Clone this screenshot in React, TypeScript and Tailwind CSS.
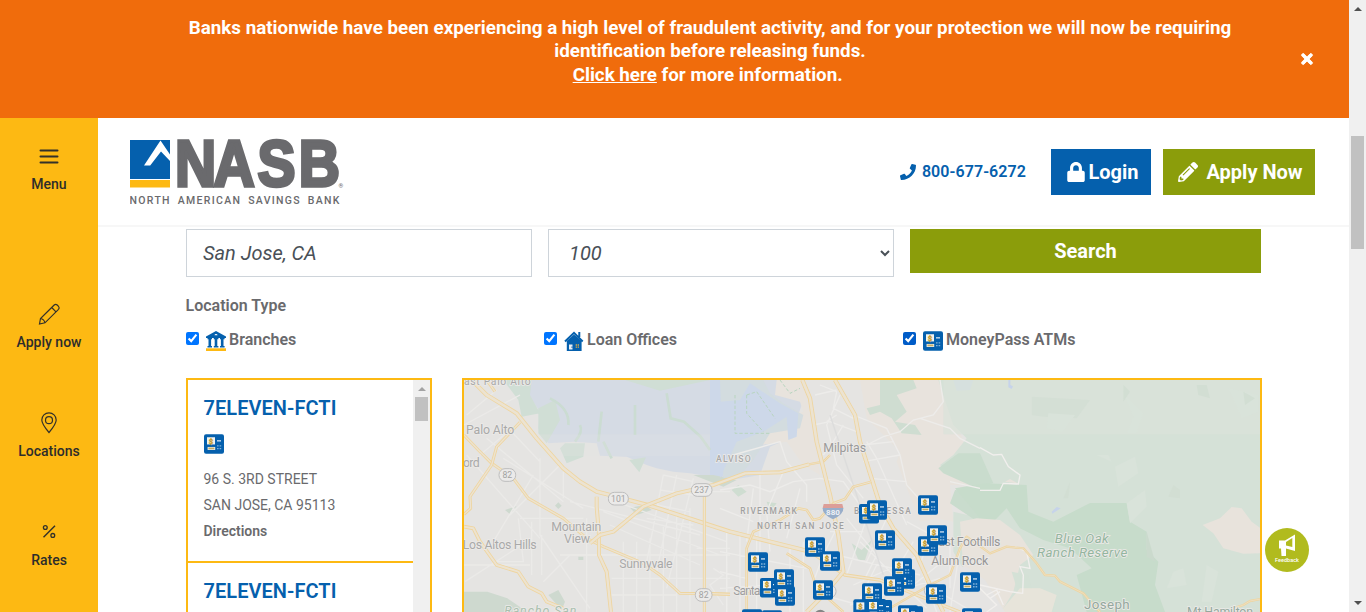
import type { ReactNode } from "react";
import { FaPhone, FaLock, FaPencilAlt, FaTimes } from "react-icons/fa";

function AtmGlyph() {
  return (
    <g>
      <rect x="0" y="0" width="20" height="19.5" rx="2" fill="#0560ad" />
      <rect x="3" y="3" width="8" height="7.2" fill="#f3f3ee" />
      <text x="7" y="9.4" fontSize="7.5" fontWeight="900" textAnchor="middle" fill="#c39a2c" stroke="#c39a2c" strokeWidth="0.300" fontFamily="Roboto, sans-serif">
        $
      </text>
      <rect x="3.6" y="12.7" width="7.6" height="3" fill="#f3f3ee" />
      <rect x="4.4" y="13.3" width="6" height="1.7" fill="#c3ac65" />
      <rect x="13" y="6" width="4" height="1.2" fill="#e4edf6" />
      <path d="M13 11.6h1.600M15.600 11.600h1.600M13 14.400h1.600M15.600 14.400h1.600" stroke="#7fb0d8" strokeWidth="1.400" />
    </g>
  );
}

function AtmIcon() {
  return (
    <svg viewBox="0 0 20 19.5" className="h-5 w-5 shrink-0">
      <AtmGlyph />
    </svg>
  );
}

function BranchIcon() {
  return (
    <svg viewBox="0 0 20 20" className="h-5 w-5 shrink-0">
      <path d="M10 0L0 5.600V7h20V5.600z" fill="#0560ad" />
      <path d="M8.500 4.300a1.500 1.300 0 0 1 3 0z" fill="#fff" />
      <path d="M1.500 7.500H6M7.800 7.500h4.600M14 7.500h4.600M1.500 15.700H6M7.800 15.700h4.600M14 15.700h4.600" stroke="#0560ad" strokeWidth="1.400" />
      <path d="M3.800 7v9M10 7v9M16.200 7v9" stroke="#0560ad" strokeWidth="2.600" />
      <rect y="17.300" width="20" height="2.700" fill="#fdb913" />
    </svg>
  );
}

function HouseIcon() {
  return (
    <svg viewBox="0 0 20 20" className="h-5 w-5 shrink-0">
      <path d="M10 3.500L2.800 10v10h14.800V10z" fill="#0560ad" />
      <path d="M1 10.500L10 1.800l8.700 8.700M15.300 1v5" fill="none" stroke="#0560ad" strokeWidth="2" />
      <rect x="5" y="13.500" width="3.500" height="5" fill="#e9eef3" />
      <rect x="7.500" y="15.500" width="1" height="1.400" fill="#0560ad" />
      <path d="M11.700 14h1.200M13.700 14h1.200M11.700 16.200h1.200M13.700 16.200h1.200" stroke="#f2b43c" strokeWidth="1.300" />
    </svg>
  );
}

function Logo() {
  return (
    <svg viewBox="0 0 216 68" className="h-[68px] w-[216px]">
      <rect x="0" y="2" width="40" height="39" fill="#0560ad" />
      <rect x="0" y="42" width="40" height="7.500" fill="#fdb913" />
      <path d="M30.500 2.500L14 27.500h6.200L31 13.500l9 9.500v-6.500z" fill="#fff" />
      <g transform="scale(.87 1)">
        <text x="51.700 96 146.500 194" y="48" fontSize="65.500" fontWeight="700" fill="#6a6a6d" stroke="#6a6a6d" strokeWidth="3.400" fontFamily="'Liberation Sans', sans-serif">
          NASB
        </text>
      </g>
      <text x="208.500" y="50" fontSize="6" fill="#6a6a6d" fontFamily="Roboto, sans-serif">
        ®
      </text>
      <text x="-0.500" y="66" fontSize="10.500" fontWeight="500" fill="#6a6a6d" fontFamily="Roboto, sans-serif" wordSpacing="3" textLength="210">
        NORTH AMERICAN SAVINGS BANK
      </text>
    </svg>
  );
}

const markers = [
  [84, 532], [120, 609], [162, 583], [165, 634], [255, 487], [300, 529], [279, 616],
  [417, 387], [441, 376], [594, 361], [594, 484], [621, 451], [465, 466], [525, 583],
  [516, 550], [492, 604], [426, 625], [400, 673], [456, 675], [438, 672], [618, 628],
  [720, 592], [66, 703], [126, 706], [549, 694], [534, 691], [726, 700],
];

function Road({ d, w = 9 }: { d: string; w?: number }) {
  return (
    <g fill="none" strokeLinejoin="round">
      <path d={d} stroke="#efd59f" strokeWidth={w} />
      <path d={d} stroke="#ece3d1" strokeWidth={w - 5} />
    </g>
  );
}

function Label({ x, y, size = 37, fill = "#a9a9a9", children, spacing = 0, width }: { x: number; y: number; size?: number; fill?: string; children: ReactNode; spacing?: number; width?: number }) {
  return (
    <text x={x} y={y} fontSize={size} fill={fill} stroke="#eceae8" strokeWidth="5" paintOrder="stroke" letterSpacing={spacing} textLength={width}>
      {children}
    </text>
  );
}

function Shield({ x, y, w, children }: { x: number; y: number; w: number; children: ReactNode }) {
  return (
    <g>
      <rect x={x - w / 2} y={y - 19} width={w} height="38" rx="18" fill="#ebeae9" stroke="#bdbdbd" strokeWidth="3" />
      <text x={x} y={y + 9} fontSize="26" textAnchor="middle" fill="#a2a2a2">
        {children}
      </text>
    </g>
  );
}

function MapView() {
  return (
    <svg viewBox="12 15 2388 696" className="h-[232px] w-[796px]" fontFamily="Roboto, sans-serif">
      <rect x="0" y="0" width="2410" height="720" fill="#e5e4e2" />
      {/* bay and wetlands */}
      <path d="M115 15H1010L1025 90 990 190 930 215 900 300 830 312 780 310 690 295 640 290 590 280 560 270 500 245 420 242 410 205 340 200 265 205 235 160 240 110 205 60 170 30z" fill="#d5dbe4" />
      <path d="M750 15H880L850 170 820 210 800 310 750 305z" fill="#cdd8e9" />
      <path d="M130 15h85l-5 45 30 55 -55 10 -10 -50zM235 100l50-25 15 60 -40 70 -25 -30zM300 220l15-15 60 0 -5 40 -50 20zM508 255l50-8 -20 45zM605 15h145l-150 32 -105-32z" fill="#d0ded5" />
      <path d="M620 55l12 75 40 10 50 45 28 40M270 70q60 30 55 80M425 110l-10 90M360 150q10 20-15 50M525 90v90M455 250l-25-50" fill="none" stroke="#cbdcd2" strokeWidth="8" />
      <path d="M700 300l60 0 70 15 -40 20zM510 398l45-8 20 15 -45 15zM285 392l10-10 10 10 -10 10zM135 405l35-12 -20 25zM12 650h70l60 20 60 41H12zM265 660l30-15 20 35 -10 25zM355 545h15v10h-15z" fill="#ced9cf" />
      <rect x="237" y="178" width="513" height="65" fill="#e5e4e2" opacity=".25" />
      {/* minor streets */}
      <g fill="none" stroke="#ebeae8" strokeWidth="4">
        <path d="M20 120L110 45M12 150L180 60M60 240L150 165 240 260M20 240L240 490M80 190L310 380M130 250L370 400M220 300L100 500M300 270L150 420M240 250V480L390 700M310 290V370M180 430H370M175 430L190 560 110 560M215 440V600M245 480V600M12 570H210M15 620L200 500M300 540H640M380 430V710M330 540L250 620M330 380L720 480M440 370L800 500M430 410L780 540M450 450L720 570M610 300L560 560M650 300L590 590M700 310L620 640M610 300L700 320M600 345L700 360M590 390L690 410M560 430L700 450M490 500V711M530 500V711M570 490V711M610 450V711M650 420V711M690 400V711M460 540H810M455 610H810M455 660H650M710 520H810M720 350H810M760 580L790 600 750 630 790 690M800 560V711" />
      </g>

      {/* hills east of the valley */}
      <g transform="translate(780 0)">
        <path d="M170 15H240L270 90 300 300 250 270 200 200 120 210 40 240 5 310 50 240 120 150 250 110 240 80 165 60zM420 15H660L780 330 690 330 700 440 650 430 600 440 530 260 540 230 440 130z" fill="#e8e3dd" />
        <path d="M0 15h130l20 40 40 30 60 35 -10 40 -90 15 -50 80 -40 45 -50 10z" fill="#d3dcdf" />
        <path d="M0 80l60-5 30-50 90 60 55 30 -5 70 -25 10 -5 -70 -70 45 -80 30 -50 110zM50 90l40-35 55 30 -20 60 -30 30z" fill="#cdd8e9" />
        <path d="M80 60L110 50 165 130M45 60V175H150M80 60v55l50 55M180 15l30 40 30-15" fill="none" stroke="#b8d5bf" strokeWidth="3" strokeDasharray="10 6" />
        <path d="M480 15h100l10 25 -60 20 30 50 -35 30 60 10 20 30 -60-5 -30-45 -35-20 -30 10 -10-20 40-10zM395 505l30 20 30-30 -20 60 -20 0zM35 345l20-15 25 20 -25 15zM140 380l30 5 -20 25z" fill="#cfddd1" />
        <path d="M655 15H1680V720H730L740 600 700 530 700 410 785 430 780 340 690 300 660 270 700 240 740 190 700 150 670 60z" fill="#d5e1d7" />
        <path d="M655 280l60-45 65 0 40 90 -60 10 -90-40zM705 345l120 10 0 90 -60-10 -75-50z" fill="#c9dccd" />
        <path d="M700 15h60l-10 30 -40 2z" fill="#ced9e8" />
      </g>
      <g transform="translate(1560 0)">
        <rect x="-110" y="15" width="960" height="163" fill="#dae2da" opacity=".7" />
        <path d="M-75 340L15 325 140 330 145 410 220 440 330 384H440L450 440 500 470 500 525 535 560 525 630 555 711H320L290 600 335 580 270 520 190 495 120 460 80 400 40 440 0 430z" fill="#c7dccb" />
        <path d="M155 65L330 75 290 130 190 125 155 120z" fill="#d4dfd5" />
        <path d="M205 115l80 5 -35 50 -50-10zM405 275l60-30 10 50 -60 40zM440 385l55-40 5 50 -50 50zM745 40l90 20 0 50 -50 20zM350 240l35 0 10 20zM680 570l35 20 -20 90 -30 0zM580 590l30-10 10 50 -60 10zM430 55l60 60 -20 60 -30 0 20-50z" fill="#d9e3da" />
        <path d="M650 30l30 0 10 40 -35-10zM270 320l-20 50 15 0zM430 30l20 20 -20 30zM790 50l35 20 -30 20zM580 330l20 15 0 25 -35-5z" fill="#d2ded3" />
        <path d="M500 470v75l25 15z" fill="#cbdacd" />
        <path d="M668 450L720 430 755 396 785 400 815 440 842 460V535L790 536 730 520 700 475zM-60 440l50-10 70 5 60 45 40 60 -40 30 -20 80 -30 50 -100 11 -30-60 10-70zM75 320l15-8 25 14z" fill="#e8e3dc" />
        <path d="M95 590l50 10 15 60 -40 10zM150 650l50 0 30 10 -10 50 -90 1z" fill="#d4e1d6" />
        <path d="M120 640l60 0 50 20 -15 51H60z" fill="#e7e4da" />
        <path d="M215 410l15-14 12 4 -25 16zM85 15l6 0 0 15 8 4 -4 8 -10-5z" fill="#c6d3ea" />
        <path d="M-120 575l80 0 55 40 60 96H-120z" fill="#e5e4e3" />
        <path d="M0 218L40 240 65 238 85 275 120 300 115 327 70 325 60 346 0 346M105 515L140 530 150 580 120 575 130 600 128 655 90 650 0 630M20 660L50 645 70 690M-20 620L50 690 20 711M30 670l30-20" fill="none" stroke="#f1efed" strokeWidth="4" />
      </g>
      <g transform="translate(780 0)" fill="none" stroke="#edecea" strokeWidth="4">
        <path d="M660 15L670 80 640 120 580 135 540 170 490 185 440 210M780 220L720 190 690 160 600 130M690 320L780 340M300 30L350 50 340 100 400 130 400 110M285 60L350 45M320 140L350 120M370 150L340 200 310 240M400 120L500 160 540 240 560 330 640 420M430 210L520 200M430 260L540 240M450 310L560 320M440 200L470 250 560 450M360 60L320 150 350 270 430 370M280 150L330 140 410 170M40 240L180 200 200 260 260 330 260 380M0 345L90 330 150 350 220 320 300 310 370 320 420 390 500 400M120 300V550M190 290L140 410 150 530M240 340L200 490M100 340L80 500M0 400L100 440M0 530L260 580M0 590L80 610M0 640L150 630M20 470V711M60 470V711M110 480V711M210 520V711M250 500V711M360 440L310 540 280 620M380 430L470 540 430 620M440 430L380 600M500 430L440 560M420 500L620 700M350 540L600 600M400 630L690 500M390 690L660 610M310 660L490 711M580 500L520 600M630 480L600 570 650 711M690 500L690 640M720 520L690 711M330 470H430M470 570L400 711M560 440L690 510M680 550L580 630M640 640L740 700" />
        <path d="M330 120L490 600" stroke="#dcdcdc" />
      </g>

      {/* highways */}
      <Road d="M40 20L80 60 170 115 230 190 310 280 360 320 410 350 450 360 570 392 810 470 1050 530" w={13} />
      <Road d="M1050 530L1155 600 1260 615 1370 660 1500 711" w={10} />
      <Road d="M12 180L55 225 95 265 160 310 205 370 310 430 380 490 430 515 550 565 600 600 660 655 810 658" />
      <Road d="M180 142L110 215 95 270 30 365 32 400 12 418M80 15L105 50" />
      <Road d="M410 365V395L417 480 417 540 440 590 453 711" w={12} />
      <Road d="M390 505L420 480 460 470 550 395 650 355 760 330 855 295 960 292 1047 268" w={12} />
      <Road d="M1047 268L1090 260 1110 240" w={7} />
      <Road d="M12 455L40 460 60 500 110 570 175 590 205 635 245 655 260 680 310 700" w={11} />
      <Road d="M733 355V711M733 655L810 658" w={9} />
      <Road d="M1027 15L1050 70 1070 200 1110 360 1135 480 1150 590 1100 650 1040 711" w={13} />
      <Road d="M1125 15L1185 120 1200 200 1260 390 1300 460 1370 540 1410 630 1450 711" w={13} />
      <Road d="M1235 320L1180 335 1155 372 1120 385 1080 430 1060 435 1040 405 1015 400 960 435 880 470 860 520 860 711M980 535L1050 580 1070 640 1150 711M860 655L950 650 990 690" w={8} />
      <Road d="M1270 711L1410 630 1470 600 1500 520 1520 485 1590 535 1640 515 1690 520 1730 565 1755 600 1785 602 1800 620 1870 655 1900 690 1920 711" w={7} />
      <Road d="M2320 700L2350 690 2370 678 2402 672" w={7} />

      <Label x={12} y={30} size={31} width={200}>ast Palo Alto</Label>
      <Label x={18} y={177} width={145}>Palo Alto</Label>
      <Label x={9} y={276} width={50}>ord</Label>
      <Label x={274} y={468} width={150}>Mountain</Label>
      <Label x={312} y={504} width={78}>View</Label>
      <Label x={8} y={522} width={222}>Los Altos Hills</Label>
      <Label x={478} y={579} width={160}>Sunnyvale</Label>
      <g fontStyle="italic"><Label x={133} y={720} fill="#a9bfae" width={216}>Rancho San</Label></g>
      <g fontWeight="500">
        <Label x={768} y={261} size={26} spacing={3} width={107}>ALVISO</Label>
        <Label x={841} y={417} size={25} fill="#a0a0a0" width={169}>RIVERMARK</Label>
        <Label x={891} y={462} size={25} fill="#a0a0a0" width={260}>NORTH SAN JOSE</Label>
        <Label x={1182} y={417} size={25} fill="#a0a0a0" width={170}>BERRYESSA</Label>
      </g>
      <Label x={1090} y={232} fill="#9a9a9a" width={128}>Milpitas</Label>
      <Label x={820} y={661} fill="#9d9d9d" width={155}>Santa Clara</Label>
      <Label x={1415} y={514} fill="#969696" width={206}>East Foothills</Label>
      <Label x={1414} y={571} fill="#969696" width={171}>Alum Rock</Label>
      <g fontStyle="italic">
        <Label x={1784} y={504} size={40} fill="#94b69f" width={162}>Blue Oak</Label>
        <Label x={1731} y={546} size={40} fill="#94b69f" width={271}>Ranch Reserve</Label>
      </g>
      <Label x={1872} y={703} size={40} fill="#94a89d" width={137}>Joseph</Label>
      <Label x={2181} y={724} fill="#94a89d" width={198}>Mt Hamilton</Label>

      <Shield x={142} y={300} w={50}>82</Shield>
      <Shield x={475} y={371} w={60}>101</Shield>
      <Shield x={725} y={345} w={62}>237</Shield>
      <Shield x={731} y={660} w={50}>82</Shield>
      <Shield x={1104} y={649} w={48}>87</Shield>
      <Shield x={1418} y={646} w={50}>130</Shield>
      <circle cx="1081" cy="722" r="18" fill="#858585" />
      <path d="M1091 387h56l3 12h-62z" fill="#dc9e98" />
      <path d="M1088 399h62q2 18-31 34q-33-16-31-34z" fill="#98aeca" />
      <text x="1119" y="420" fontSize="24" fontWeight="700" textAnchor="middle" fill="#eef1f5">880</text>

      {markers.map(([x, y], i) => (
        <g key={i} transform={`translate(${x + 780} ${y}) scale(3)`}>
          <AtmGlyph />
        </g>
      ))}
    </svg>
  );
}

function SideItem({ label, children, className }: { label: string; children: ReactNode; className: string }) {
  return (
    <a className={`flex flex-col items-center ${className}`}>
      <svg viewBox="0 0 24 24" className="h-6 w-6" fill="none" stroke="#33312a" strokeWidth="1.200">
        {children}
      </svg>
      <span className="mt-1.5 text-[14px] leading-5 font-medium text-[#2d2d2b]">{label}</span>
    </a>
  );
}

function Sidebar() {
  return (
    <nav className="flex w-[98px] shrink-0 flex-col bg-[#fdb913]">
      <SideItem label="Menu" className="mt-[26px]">
        <path d="M3.500 6.500h17M3.500 12.500h17M3.500 18.500h17" strokeWidth="2" strokeLinecap="round" />
      </SideItem>
      <SideItem label="Apply now" className="mt-[108px]">
        <path d="M2.500 22l1-5.500L17.200 3a2.200 2.200 0 0 1 3 0l1.300 1.300a2.200 2.200 0 0 1 0 3L8 20.800zM14.700 5.500l4.300 4.300M3.500 16.500q3.500.5 4.500 4.300" />
      </SideItem>
      <SideItem label="Locations" className="mt-[59px]">
        <path d="M12 21.500S4.800 13 4.800 9a7.200 7.200 0 0 1 14.400 0C19.200 13 12 21.500 12 21.500z" />
        <circle cx="12" cy="9.200" r="3.500" />
      </SideItem>
      <SideItem label="Rates" className="mt-[59px]">
        <path d="M6.500 17.200L18 5.700" strokeWidth="1.500" />
        <circle cx="8.300" cy="7.500" r="1.900" strokeWidth="1.300" />
        <circle cx="15.800" cy="15.400" r="1.900" strokeWidth="1.300" />
      </SideItem>
    </nav>
  );
}

function LocationCard() {
  return (
    <article className="h-[183px] border-b-2 border-[#fdb913] pt-4 pl-[15.500px]">
      <h3 className="text-[20px] leading-6 font-semibold tracking-[0.050px] text-[#0560ad]">7ELEVEN-FCTI</h3>
      <div className="mt-3.5"><AtmIcon /></div>
      <div className="mt-3 text-[14px] leading-[26px] text-[#6a6a6d]">
        <p>96 S. 3RD STREET</p>
        <p>SAN JOSE, CA 95113</p>
        <p className="font-semibold">Directions</p>
      </div>
    </article>
  );
}

export default function App() {
  return (
    <div className="relative flex h-[612px] w-[1366px] overflow-hidden bg-white font-['Roboto',sans-serif] text-[#6a6a6d]">
      <div className="flex w-[1349px] flex-col">
        <div className="flex h-[118px] shrink-0 items-center bg-[#f06c0c] text-white">
          <p className="mb-[14px] ml-[98px] w-[1224px] text-center text-[18.800px] leading-[23.400px] font-bold">
            Banks nationwide have been experiencing a high level of fraudulent activity, and for your protection we will now be requiring
            <br />
            identification before releasing funds.
            <br />
            <a className="underline">Click here</a> for more information.{"\u00a0"}
          </p>
          <FaTimes className="-ml-[23px] h-4 w-4" stroke="currentColor" strokeWidth="30" />
        </div>
        <div className="flex min-h-0 flex-1">
          <Sidebar />
          <main className="flex min-w-0 flex-1 flex-col">
            <header className="flex h-[109px] shrink-0 items-center border-b-2 border-[#f7f7f7] pr-[34px] pl-8">
              <Logo />
              <div className="ml-auto flex items-center">
                <FaPhone className="h-4 w-4 text-[#0560ad]" />
                <span className="ml-1.5 text-[16px] font-semibold tracking-[0.080px] text-[#0560ad]">800-677-6272</span>
                <button className="ml-[25px] flex h-[46px] w-[100px] items-center justify-center bg-[#0560ad] pl-1 text-[20px] font-bold text-white">
                  <FaLock className="mr-[3px] h-5 w-[18px]" />
                  Login
                </button>
                <button className="ml-3 flex h-[46px] w-[152px] items-center justify-center bg-[#8b9d0b] pl-[3px] text-[20px] font-bold text-white">
                  <FaPencilAlt className="mr-2 h-5 w-5" />
                  Apply Now
                </button>
              </div>
            </header>
            <div className="flex min-h-0 flex-1 flex-col pt-0.5 pl-[88px]">
              <div className="flex items-start gap-4">
                <input defaultValue="San Jose, CA" className="h-12 w-[346px] border border-[#ced4da] px-4 text-[20px] text-[#495057] italic" />
                <select className="h-12 w-[346px] border border-[#ced4da] bg-white pl-4 text-[20px] text-[#495057] italic">
                  <option>100</option>
                </select>
                <button className="h-11 w-[351px] bg-[#8b9d0b] text-[20px] font-bold text-white">Search</button>
              </div>
              <p className="mt-[17px] -ml-[0.500px] text-[16px] leading-6 font-semibold">Location Type</p>
              <div className="mt-2.5 grid grid-cols-[358px_359px_359px] text-[16px] leading-6 font-semibold">
                <label className="flex items-center">
                  <input type="checkbox" defaultChecked className="mr-[7px] mb-[3px] h-[13px] w-[13px]" />
                  <span className="mt-[1px] mr-[3px]"><BranchIcon /></span>
                  Branches
                </label>
                <label className="flex items-center">
                  <input type="checkbox" defaultChecked className="mr-[7px] mb-[3px] h-[13px] w-[13px]" />
                  <span className="mt-[1px] mr-[3px]"><HouseIcon /></span>
                  Loan Offices
                </label>
                <label className="flex items-center">
                  <input type="checkbox" defaultChecked className="mr-[7px] mb-[3px] h-[13px] w-[13px] accent-[#005cc8]" />
                  <span className="mt-[1px] mr-[3px]"><AtmIcon /></span>
                  MoneyPass ATMs
                </label>
              </div>
              <div className="mt-[26px] flex min-h-0 flex-1 gap-[30px]">
                <div className="flex w-[246px] overflow-hidden border-2 border-b-0 border-[#fdb913]">
                  <div className="w-[225px]">
                    <LocationCard />
                    <LocationCard />
                  </div>
                  <div className="flex w-[17px] flex-col items-center bg-[#f0f0f0]">
                    <div className="mt-[7px] h-0 w-0 border-x-[4px] border-b-[4px] border-x-transparent border-b-[#a3a3a3]" />
                    <div className="mt-[6px] h-6 w-[13px] bg-[#c1c1c1]" />
                  </div>
                </div>
                <div className="w-[800px] overflow-hidden border-2 border-b-0 border-[#fdb913]">
                  <MapView />
                </div>
              </div>
            </div>
          </main>
        </div>
      </div>
      <div className="flex w-[17px] flex-col items-center bg-[#f0f0f0]">
        <div className="mt-[7px] h-0 w-0 border-x-[4px] border-b-[4px] border-x-transparent border-b-[#505050]" />
        <div className="mt-[125px] h-[113px] w-[13px] bg-[#c1c1c1]" />
        <div className="mt-auto mb-[7px] h-0 w-0 border-x-[4px] border-t-[4px] border-x-transparent border-t-[#505050]" />
      </div>
      <button className="absolute top-[528px] left-[1265px] flex h-11 w-11 flex-col items-center rounded-full bg-[#b1bb1e] text-white">
        <svg viewBox="0 0 18 23" className="mt-[6px] h-[23px] w-[18px]">
          <path d="M1 6.500h6L17 0.500V17L8 14.500V22H3.500L3 14.500H1z" fill="#fff" />
          <path d="M8 8L14.300 4v9L8 11.500z" fill="#b1bb1e" />
        </svg>
        <span className="text-[5.500px] leading-[6px] font-medium">Feedback</span>
      </button>
    </div>
  );
}
